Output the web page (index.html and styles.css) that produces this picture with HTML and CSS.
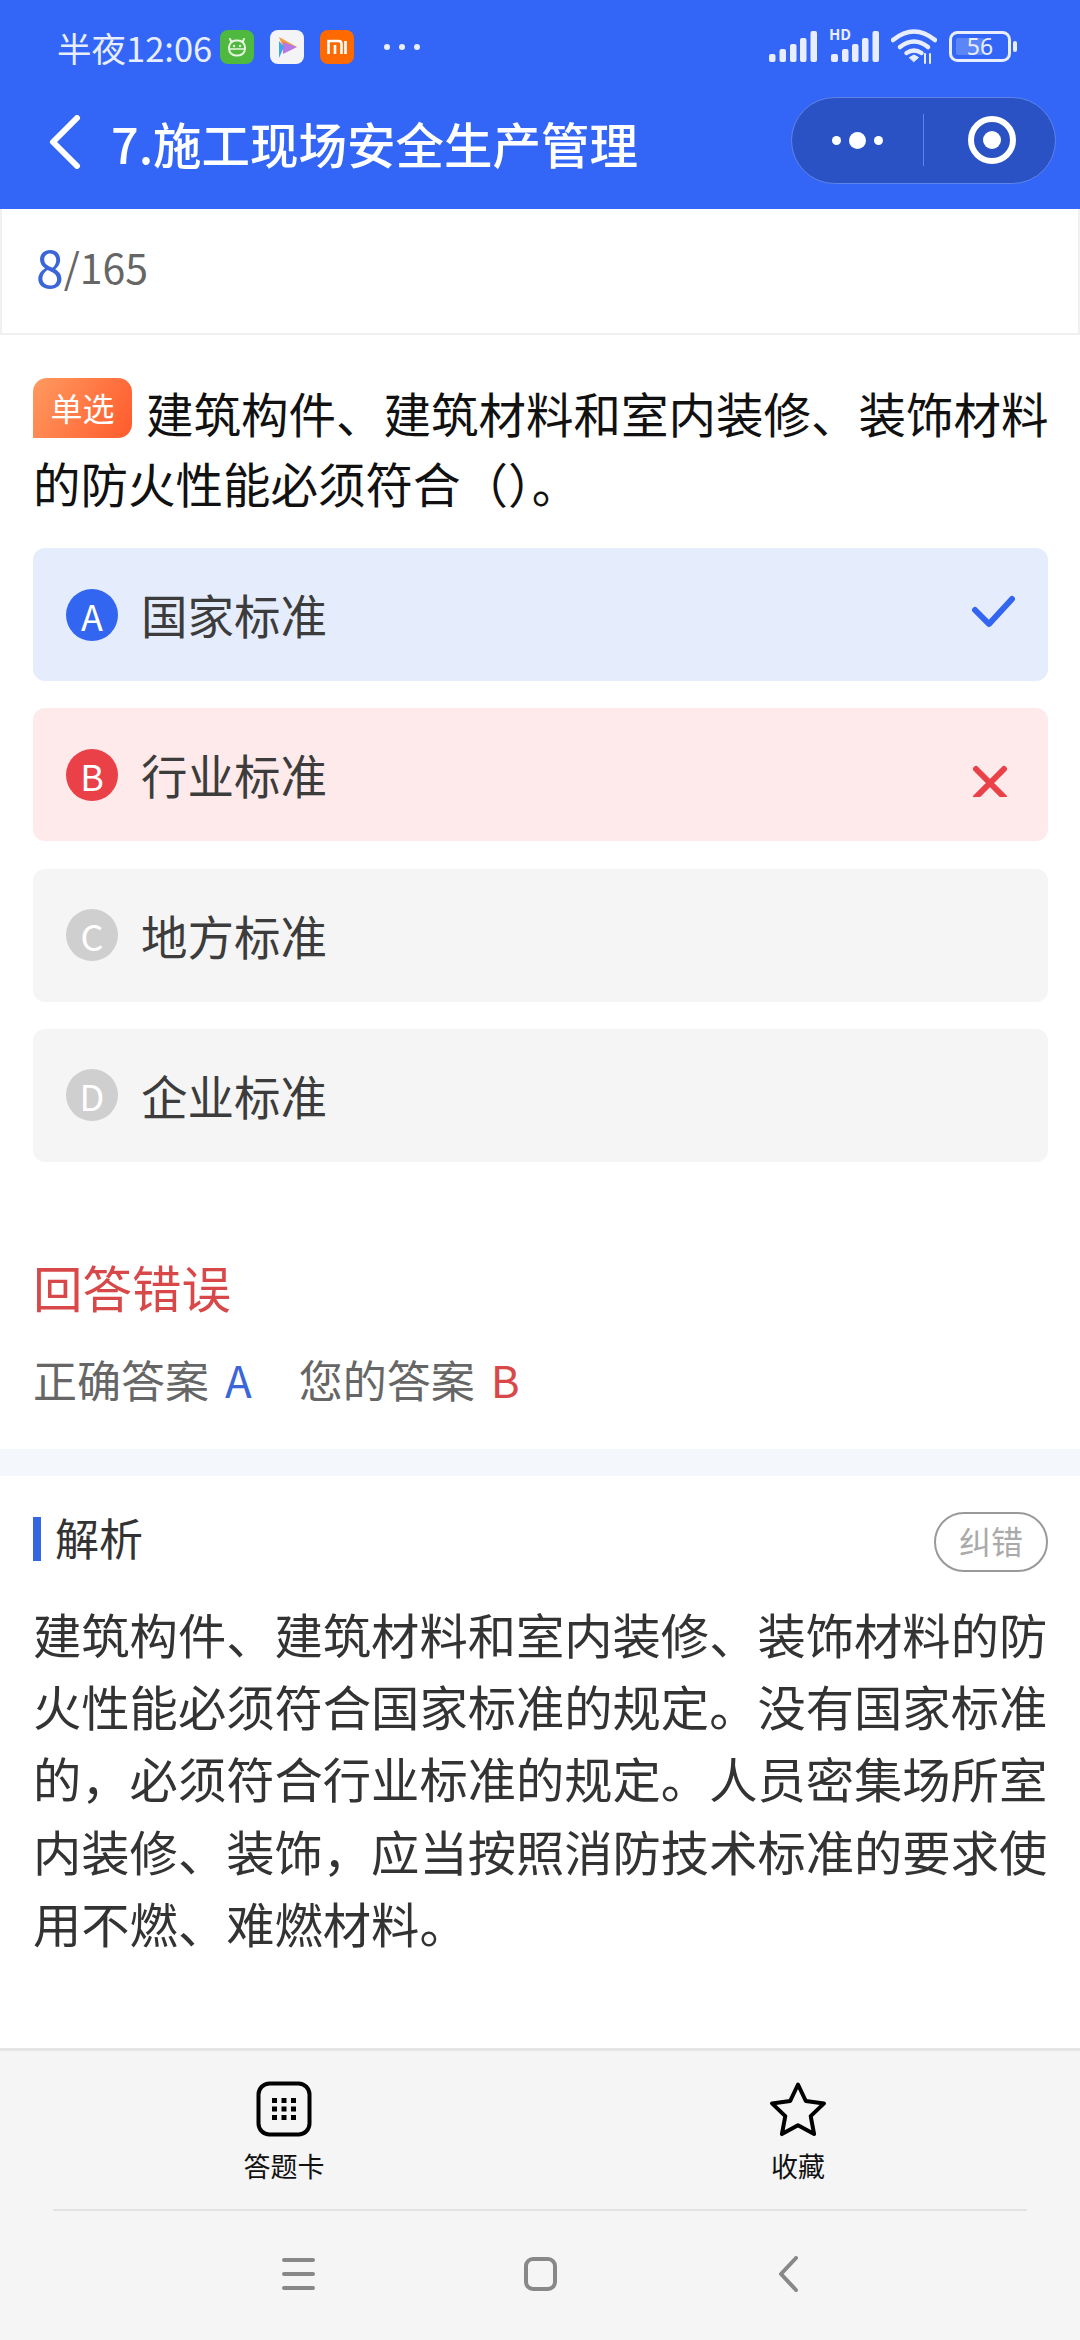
FILE: index.html
```html
<!DOCTYPE html>
<html lang="zh">
<head>
<meta charset="UTF-8" />
<meta name="viewport" content="width=device-width, initial-scale=1" />
<title>7.施工现场安全生产管理</title>
<link rel="stylesheet" href="styles.css">
</head>
<body>
<div class="page">
  <header class="top">
    <div class="status">
      <div class="status-left">
        <span class="time">半夜12:06</span>
        <svg class="app-icon" viewBox="0 0 34 34">
          <rect width="34" height="34" rx="8" fill="#4fb83e"/>
          <path d="M10 9l1.500 3M24 9l-1.500 3" stroke="#e8f6e0" stroke-width="2" fill="none" stroke-linecap="round"/>
          <rect x="9" y="10.500" width="16" height="15" rx="7" fill="none" stroke="#e8f6e0" stroke-width="2"/>
          <path d="M9 19h16" stroke="#e8f6e0" stroke-width="1.500"/>
          <circle cx="14" cy="16" r="1.200" fill="#e8f6e0"/>
          <circle cx="20" cy="16" r="1.200" fill="#e8f6e0"/>
        </svg>
        <svg class="app-icon" viewBox="0 0 34 34">
          <rect width="34" height="34" rx="8" fill="#f4f4f6"/>
          <path d="M9 7l18 10H13z" fill="#f59a3c"/>
          <path d="M13 12l14 5-14 7z" fill="#b478e8"/>
          <path d="M9 11l5 6-5 11z" fill="#3aa6ee"/>
        </svg>
        <svg class="app-icon" viewBox="0 0 34 34">
          <rect width="34" height="34" rx="8" fill="#ff6a00"/>
          <path d="M8.500 24v-13h10q3 0 3 3v10M15 24v-9M25.500 11v13" stroke="#fff" stroke-width="2.600" fill="none"/>
        </svg>
        <span class="status-dots"><i></i><i></i><i></i></span>
      </div>
      <div class="status-right">
        <svg width="48" height="34" viewBox="0 0 48 34" fill="#e8eeff">
          <rect x="0" y="24" width="6.500" height="8" rx="2"/>
          <rect x="10.500" y="19" width="6.500" height="13" rx="2"/>
          <rect x="21" y="14" width="6.500" height="18" rx="2"/>
          <rect x="31" y="8" width="6.500" height="24" rx="2"/>
          <rect x="41.500" y="1" width="6.500" height="31" rx="2"/>
        </svg>
        <div class="signal-hd">
          <span class="hd">HD</span>
          <svg width="50" height="34" viewBox="0 0 50 34" fill="#e8eeff">
            <rect x="2" y="24" width="7" height="8" rx="2"/>
            <rect x="13" y="19" width="6.500" height="13" rx="2"/>
            <rect x="23" y="14" width="6.500" height="18" rx="2"/>
            <rect x="33" y="8" width="6.500" height="24" rx="2"/>
            <rect x="43.500" y="1" width="6.500" height="31" rx="2"/>
          </svg>
        </div>
        <svg width="46" height="36" viewBox="0 0 46 36" fill="none" stroke="#e8eeff" stroke-width="4.500" stroke-linecap="round">
          <path d="M2 11q21-17 42 0"/>
          <path d="M9 18q14-11 28 0"/>
          <path d="M15.500 24q7.500-5 15 0"/>
          <path d="M18.500 28.500l4.500-2.500 4.500 2.500-4.500 4z" fill="#e8eeff" stroke-width="1"/>
          <path d="M34 25v9M39 25v9" stroke-width="2"/>
        </svg>
        <svg width="68" height="32" viewBox="0 0 68 32">
          <rect x="1.500" y="1.500" width="59" height="28" rx="7" fill="none" stroke="#e8eeff" stroke-width="3"/>
          <rect x="7" y="7" width="28" height="17" rx="2" fill="#5c86f8"/>
          <rect x="64" y="10" width="4" height="11" rx="2" fill="#e8eeff"/>
          <text x="31" y="24" text-anchor="middle" class="battery-num">56</text>
        </svg>
      </div>
    </div>
    <div class="navbar">
      <svg class="back" width="34" height="54" viewBox="0 0 34 54" fill="none" stroke="#fff" stroke-width="6" stroke-linecap="round" stroke-linejoin="round">
        <path d="M29 3L5 27l24 24"/>
      </svg>
      <h1 class="title">7.施工现场安全生产管理</h1>
      <div class="capsule">
        <div class="capsule-more"><i></i><b></b><i></i></div>
        <div class="capsule-line"></div>
        <div class="capsule-target"></div>
      </div>
    </div>
  </header>

  <div class="counter"><span class="counter-now">8</span>/165</div>

  <section class="question">
    <p class="stem"><span class="tag">单选</span>建筑构件、建筑材料和室内装修、装饰材料的防火性能必须符合（）。</p>
    <div class="options">
      <div class="option option-right">
        <span class="letter">A</span><span class="option-text">国家标准</span>
        <svg class="mark" width="44" height="44" viewBox="0 0 44 44" fill="none" stroke="#3366f0" stroke-width="6" stroke-linecap="round" stroke-linejoin="round">
          <path d="M4 17l14 14 23-25"/>
        </svg>
      </div>
      <div class="option option-wrong">
        <span class="letter">B</span><span class="option-text">行业标准</span>
        <svg class="mark" width="44" height="44" viewBox="0 0 44 44" fill="none" stroke="#ea4048" stroke-width="6" stroke-linecap="round">
          <path d="M5 16l28 28M33 16L5 44"/>
        </svg>
      </div>
      <div class="option">
        <span class="letter">C</span><span class="option-text">地方标准</span>
      </div>
      <div class="option">
        <span class="letter">D</span><span class="option-text">企业标准</span>
      </div>
    </div>
  </section>

  <section class="result">
    <div class="result-title">回答错误</div>
    <div class="result-line">
      <span>正确答案</span><span class="answer-blue">A</span>
      <span class="mine">您的答案</span><span class="answer-red">B</span>
    </div>
  </section>

  <div class="band"></div>

  <section class="analysis">
    <div class="analysis-head">
      <h2 class="analysis-title">解析</h2>
      <span class="report">纠错</span>
    </div>
    <p class="analysis-text">建筑构件、建筑材料和室内装修、装饰材料的防火性能必须符合国家标准的规定。没有国家标准的，必须符合行业标准的规定。人员密集场所室内装修、装饰，应当按照消防技术标准的要求使用不燃、难燃材料。</p>
  </section>

  <footer class="bottom">
    <div class="tabs">
      <div class="tab">
        <svg width="56" height="56" viewBox="0 0 56 56">
          <rect x="2.500" y="2.500" width="51" height="51" rx="11" fill="none" stroke="#000" stroke-width="4"/>
          <g fill="#000">
            <rect x="16" y="17" width="5" height="5"/><rect x="25.500" y="17" width="5" height="5"/><rect x="35" y="17" width="5" height="5"/>
            <rect x="16" y="25.500" width="5" height="5"/><rect x="25.500" y="25.500" width="5" height="5"/><rect x="35" y="25.500" width="5" height="5"/>
            <rect x="16" y="34" width="5" height="5"/><rect x="25.500" y="34" width="5" height="5"/><rect x="35" y="34" width="5" height="5"/>
          </g>
        </svg>
        <span class="tab-label">答题卡</span>
      </div>
      <div class="tab">
        <svg width="58" height="56" viewBox="0 0 58 56">
          <path d="M29 3.500l7.800 16.500 18.200 2.400-13.300 12.700 3.400 18-16.100-8.800-16.100 8.800 3.400-18L3 22.400l18.200-2.400z" fill="none" stroke="#000" stroke-width="4" stroke-linejoin="round"/>
        </svg>
        <span class="tab-label">收藏</span>
      </div>
    </div>
    <div class="divider"></div>
    <div class="sysnav">
      <div class="sysnav-item sysnav-shift">
        <svg width="33" height="34" viewBox="0 0 33 34" fill="none" stroke="#888" stroke-width="4" stroke-linecap="round">
          <path d="M2 3h29M2 17h29M2 31h29"/>
        </svg>
      </div>
      <div class="sysnav-item">
        <svg width="33" height="34" viewBox="0 0 33 34">
          <rect x="2" y="2" width="29" height="30" rx="7" fill="none" stroke="#888" stroke-width="4"/>
        </svg>
      </div>
      <div class="sysnav-item sysnav-shift">
        <svg width="21" height="36" viewBox="0 0 21 36" fill="none" stroke="#888" stroke-width="4" stroke-linecap="round" stroke-linejoin="round">
          <path d="M18 2L3 18l15 16"/>
        </svg>
      </div>
    </div>
  </footer>
</div>
</body>
</html>
```

FILE: styles.css
```css
* {
  box-sizing: border-box;
}
body {
  margin: 0;
  background: #fff;
  font-family: "Noto Sans CJK SC", "Noto Sans", sans-serif;
}
p, h1, h2 {
  margin: 0;
  font-weight: 400;
}
.page {
  width: 1080px;
  height: 2340px;
  display: flex;
  flex-direction: column;
  overflow: hidden;
}

/* header */
.top {
  height: 209px;
  background: #3366f6;
}
.status {
  height: 94px;
  padding: 0 63px 0 57px;
  display: flex;
  align-items: center;
  justify-content: space-between;
}
.status-left, .status-right {
  display: flex;
  align-items: center;
}
.time {
  width: 163px;
  font-size: 34.500px;
  color: #e8eeff;
  white-space: nowrap;
}
.app-icon {
  width: 34px;
  height: 34px;
  margin-right: 16px;
}
.status-dots {
  display: flex;
  gap: 9px;
  margin-left: 14px;
}
.status-dots i {
  width: 6px;
  height: 6px;
  border-radius: 50%;
  background: #e8eeff;
}
.status-right {
  gap: 12px;
}
.signal-hd {
  position: relative;
  height: 34px;
}
.hd {
  position: absolute;
  left: 0;
  top: -5px;
  font-size: 15px;
  line-height: 18px;
  font-weight: 700;
  color: #e8eeff;
}
.battery-num {
  font-size: 23px;
  fill: #e8eeff;
  font-family: "Noto Sans", sans-serif;
}
.navbar {
  height: 92px;
  padding: 0 24px 0 48px;
  display: flex;
  align-items: center;
}
.back {
  margin-top: 4px;
}
.title {
  margin: 6px 0 0 29px;
  font-size: 48.500px;
  font-weight: 500;
  color: #fff;
  white-space: nowrap;
}
.capsule {
  width: 265px;
  height: 87px;
  margin-left: auto;
  border: 1px solid #5d84ea;
  border-radius: 44px;
  background: #2a52c4;
  display: flex;
  align-items: center;
}
.capsule-more {
  width: 131px;
  display: flex;
  align-items: center;
  justify-content: center;
  gap: 8px;
}
.capsule-more i {
  width: 9px;
  height: 9px;
  border-radius: 50%;
  background: #fff;
}
.capsule-more b {
  width: 17px;
  height: 17px;
  border-radius: 50%;
  background: #fff;
}
.capsule-line {
  width: 1px;
  height: 52px;
  background: #5d84ea;
}
.capsule-target {
  width: 48px;
  height: 48px;
  margin-left: 44px;
  border: 6px solid #fff;
  border-radius: 50%;
  position: relative;
}
.capsule-target::after {
  content: "";
  position: absolute;
  left: 9px;
  top: 9px;
  width: 18px;
  height: 18px;
  border-radius: 50%;
  background: #fff;
}

/* counter */
.counter {
  height: 126px;
  padding: 0 0 10px 34px;
  border: solid #f0f0f0;
  border-width: 0 2px 2px;
  display: flex;
  align-items: center;
  font-size: 41px;
  color: #666;
}
.counter-now {
  font-size: 50px;
  color: #3a66d8;
}

/* question */
.question {
  padding: 43px 32px 0 33px;
}
.stem {
  margin-right: -6px;
  font-size: 47.500px;
  line-height: 70px;
  color: #111;
}
.tag {
  display: inline-block;
  width: 99px;
  height: 60px;
  margin-right: 14px;
  border-radius: 14px 14px 14px 0;
  background: linear-gradient(120deg, #ff9a60, #ff5a2c);
  color: #fff;
  font-size: 32px;
  line-height: 58px;
  text-align: center;
  vertical-align: top;
}
.options {
  margin-top: 30px;
  display: flex;
  flex-direction: column;
  gap: 27.300px;
}
.option {
  height: 133px;
  padding: 0 33px 0 33px;
  border-radius: 12px;
  background: #f5f5f5;
  display: flex;
  align-items: center;
}
.letter {
  width: 52px;
  height: 52px;
  flex-shrink: 0;
  border-radius: 50%;
  background: #cfcfcf;
  color: #fff;
  font-size: 36px;
  line-height: 52px;
  text-align: center;
}
.option-text {
  margin-left: 23px;
  padding-bottom: 2px;
  font-size: 46.500px;
  color: #3c3c3c;
}
.mark {
  margin-left: auto;
}
.option-right {
  background: #e5edfc;
}
.option-right .letter {
  background: #3366f0;
}
.option-wrong {
  background: #feeaea;
}
.option-wrong .letter {
  background: #ea4048;
}

/* result */
.result {
  padding: 90px 33px 40px;
}
.result-title {
  font-size: 49.500px;
  line-height: 70px;
  color: #d94848;
}
.result-line {
  margin-top: 27px;
  font-size: 44px;
  line-height: 60px;
  color: #666;
  display: flex;
}
.answer-blue, .answer-red {
  margin-left: 16px;
}
.answer-blue {
  color: #3a66d8;
}
.answer-red {
  color: #d94848;
}
.mine {
  margin-left: 47px;
}
.band {
  height: 27px;
  background: #f4f7fb;
}

/* analysis */
.analysis {
  padding: 36px 32px 0 33px;
}
.analysis-head {
  height: 60px;
  display: flex;
  align-items: center;
  justify-content: space-between;
}
.analysis-title {
  margin-bottom: 6px;
  padding: 0 0 4px 14px;
  border-left: 8px solid #3366e0;
  font-size: 44px;
  line-height: 40px;
  color: #333;
}
.report {
  width: 114px;
  height: 60px;
  border: 2px solid #999;
  border-radius: 30px;
  color: #aaa;
  font-size: 32px;
  line-height: 52px;
  text-align: center;
}
.analysis-text {
  margin-top: 25px;
  font-size: 48.300px;
  line-height: 72.300px;
  color: #333;
}

/* bottom */
.bottom {
  margin-top: auto;
  background: #f5f5f5;
  border-top: 3px solid #e5e5e5;
}
.tabs {
  height: 158px;
  padding: 30px 25px 0 27px;
  display: grid;
  grid-template-columns: 1fr 1fr;
}
.tab {
  display: flex;
  flex-direction: column;
  align-items: center;
  gap: 9px;
}
.tab-label {
  font-size: 27px;
  line-height: 40px;
  color: #111;
}
.divider {
  height: 2px;
  margin: 0 53px;
  background: #e2e2e2;
}
.sysnav {
  height: 129px;
  padding-bottom: 3px;
  display: flex;
  align-items: center;
  justify-content: center;
}
.sysnav-item {
  width: 245px;
  display: flex;
  justify-content: center;
}
.sysnav-shift {
  padding-left: 6px;
}
```
